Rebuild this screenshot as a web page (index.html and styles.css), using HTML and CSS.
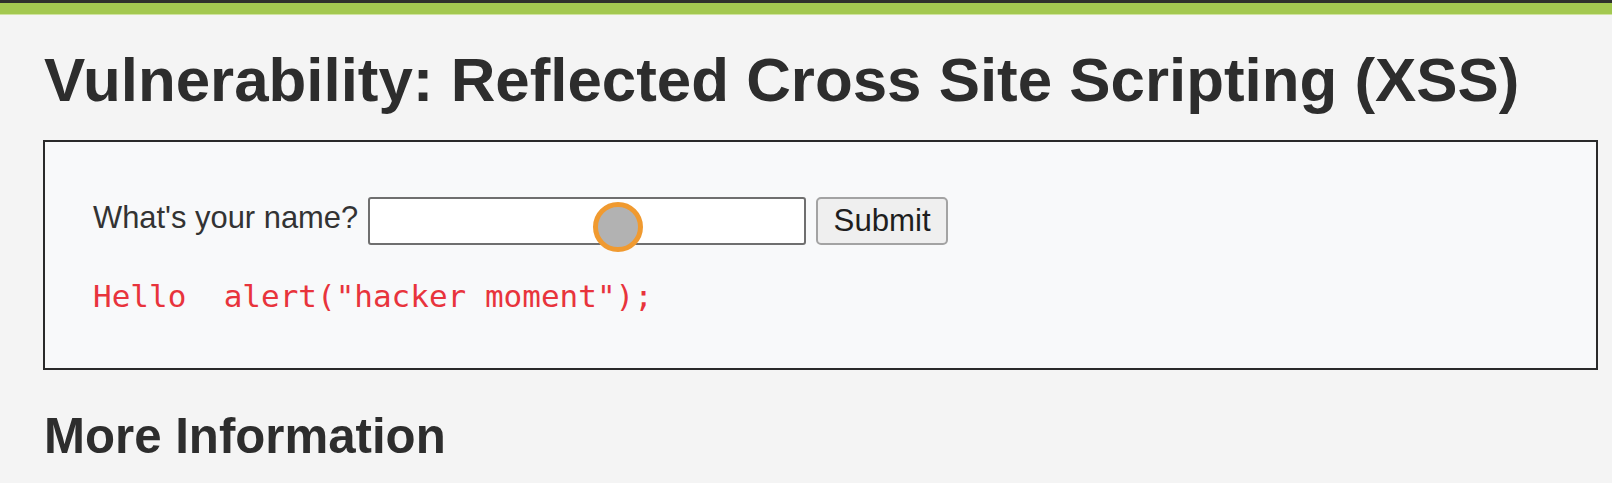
FILE: index.html
```html
<!DOCTYPE html>
<html>
<head>
<meta charset="utf-8">
<title>Vulnerability: Reflected Cross Site Scripting (XSS)</title>
<link rel="stylesheet" href="styles.css">
</head>
<body>
<div class="topbar"><div class="green"></div></div>
<div class="main">
  <h1 class="title">Vulnerability: Reflected Cross Site Scripting (XSS)</h1>
  <div class="vulnerable">
    <form class="row">
      <span class="label">What's your name?</span>
      <input class="name" type="text">
      <button class="submit" type="button">Submit</button>
    </form>
    <pre class="output">Hello  alert("hacker moment");</pre>
  </div>
  <h2 class="more">More Information</h2>
</div>
<div class="touch"></div>
</body>
</html>
```
FILE: styles.css
```css
html, body {
  margin: 0;
  padding: 0;
}
body {
  background: #f4f4f4;
  font-family: "Liberation Sans", Arial, sans-serif;
  color: #2f2f2f;
  height: 483px;
  overflow: hidden;
  position: relative;
}
.topbar {
  border-top: 3px solid #2e302c;
}
.green {
  height: 11px;
  background: #a3c850;
  border-bottom: 1px solid #cfe2a0;
}
.main {
  padding-left: 43px;
  width: 1555px;
}
.title {
  margin: 30px 0 0 0;
  font-size: 61.85px;
  line-height: 70px;
  font-weight: bold;
  color: #2d2d2d;
  padding-left: 1px;
}
.vulnerable {
  margin-top: 25px;
  border: 2px solid #2a2a2a;
  background: #f8f9fa;
  padding: 55px 0 0 48px;
  box-sizing: content-box;
  height: 171px;
}
.row {
  display: flex;
  align-items: flex-start;
  margin: 0;
}
.label {
  font-size: 30.9px;
  line-height: 36px;
  margin-top: 3px;
  color: #333;
}
.name {
  margin: 0 0 0 10px;
  width: 438px;
  height: 48px;
  box-sizing: border-box;
  border: 2px solid #6f6f6f;
  border-radius: 3px;
  background: #fff;
  padding: 0;
}
.submit {
  margin: 0 0 0 10px;
  width: 132px;
  height: 48px;
  box-sizing: border-box;
  border: 2px solid #a3a3a3;
  border-radius: 5px;
  background: #efefef;
  font-family: "Liberation Sans", Arial, sans-serif;
  font-size: 31.2px;
  color: #1e1e1e;
  padding: 0;
}
.output {
  margin: 33px 0 0 0;
  font-family: "DejaVu Sans Mono", monospace;
  font-size: 31px;
  line-height: 36px;
  color: #e8343c;
}
.more {
  margin: 38px 0 0 0;
  font-size: 49.2px;
  line-height: 56px;
  font-weight: bold;
  color: #2d2d2d;
  padding-left: 1px;
}
.touch {
  position: absolute;
  left: 593px;
  top: 202px;
  width: 50px;
  height: 50px;
  box-sizing: border-box;
  border: 5px solid #f09a30;
  border-radius: 50%;
  background: #b2b2b2;
}
```
